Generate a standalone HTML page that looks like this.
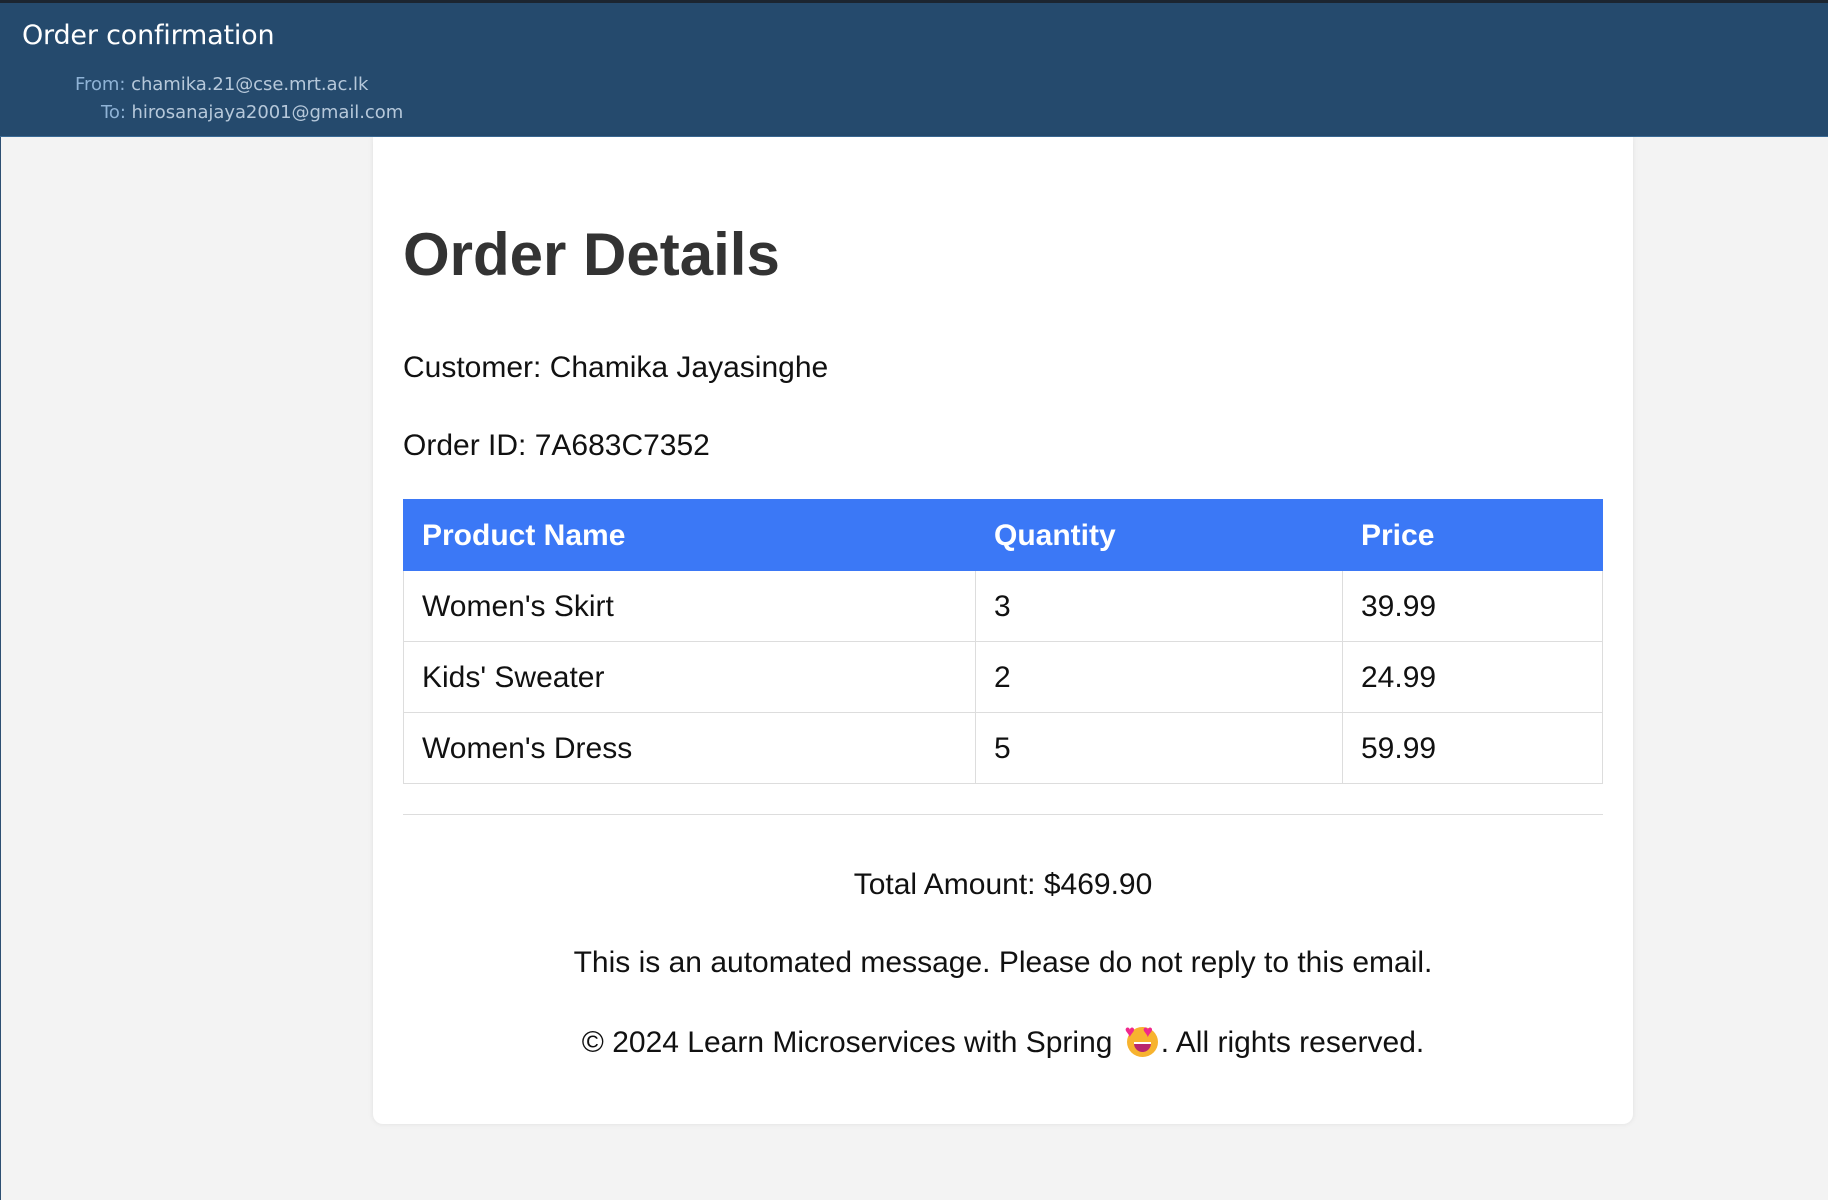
<!DOCTYPE html>
<html><head><meta charset="utf-8"><style>
*{margin:0;padding:0;box-sizing:border-box}
body{width:1828px;height:1200px;background:#f3f3f3;position:relative;overflow:hidden;font-family:"Liberation Sans",Arial,sans-serif;color:#111}
.top{position:absolute;left:0;top:0;width:1828px;height:137px;background:#254a6d;border-top:3px solid #1c2530;border-bottom:1px solid #3a6a95}
.leftline{position:absolute;left:0;top:137px;width:1px;height:1063px;background:#2d4f72}
.t{position:absolute;color:#fff;font-family:"DejaVu Sans","Liberation Sans",sans-serif}
.card{position:absolute;left:373px;top:137px;width:1260px;height:987px;background:#fff;border-radius:0 0 10px 10px;box-shadow:0 0 6px rgba(0,0,0,.08)}
.a{position:absolute;white-space:nowrap}
table{position:absolute;left:403px;top:499px;width:1200px;border-collapse:collapse;font-size:30px}
td,th{border:1px solid #ddd;height:71px;padding:2px 18px 0;text-align:left}
th{background:#3b78f6;color:#fff;border-color:#3b78f6;font-weight:bold}
th+th{border-left:1px solid #ddd}
.c{position:absolute;left:373px;width:1260px;text-align:center;font-size:30px;white-space:nowrap}
</style></head><body>
<div class="top"></div>
<div class="leftline"></div>
<div class="t" style="left:22px;top:20px;font-size:27px;letter-spacing:-0.2px">Order confirmation</div>
<div class="t" style="left:75px;top:74px;font-size:18px;color:#b6c8da;letter-spacing:-0.05px"><span style="color:#8fb3d6">From:</span> chamika.21@cse.mrt.ac.lk</div>
<div class="t" style="left:101px;top:102px;font-size:18px;color:#b6c8da;letter-spacing:-0.05px"><span style="color:#8fb3d6">To:</span> hirosanajaya2001@gmail.com</div>
<div class="card"></div>
<div class="a" style="left:403px;top:220px;font-size:60px;font-weight:bold;color:#333">Order Details</div>
<div class="a" style="left:403px;top:351px;font-size:30px">Customer: Chamika Jayasinghe</div>
<div class="a" style="left:403px;top:429px;font-size:30px">Order ID: 7A683C7352</div>
<table>
<tr><th style="width:572px">Product Name</th><th style="width:367px">Quantity</th><th>Price</th></tr>
<tr><td>Women's Skirt</td><td>3</td><td>39.99</td></tr>
<tr><td>Kids' Sweater</td><td>2</td><td>24.99</td></tr>
<tr><td>Women's Dress</td><td>5</td><td>59.99</td></tr>
</table>
<div style="position:absolute;left:403px;top:814px;width:1200px;height:1px;background:#ddd"></div>
<div class="c" style="top:868px">Total Amount: $469.90</div>
<div class="c" style="top:946px">This is an automated message. Please do not reply to this email.</div>
<div class="c" style="top:1024px">© 2024 Learn Microservices with Spring <span style="display:inline-block;position:relative;width:36px;height:32px;vertical-align:-4px;margin-left:4px"><span style="position:absolute;left:2px;top:3px;width:31px;height:30px;border-radius:50%;background:#f7b32f"></span><span style="position:absolute;left:9px;top:18px;width:17px;height:10px;background:#b9266e;border-radius:0 0 9px 9px;border-top:2px solid #fff"></span><span style="position:absolute;left:0;top:-1px;font-size:17px;color:#f0288c;line-height:17px">♥</span><span style="position:absolute;left:18px;top:-1px;font-size:17px;color:#f0288c;line-height:17px">♥</span></span>. All rights reserved.</div>
</body></html>
